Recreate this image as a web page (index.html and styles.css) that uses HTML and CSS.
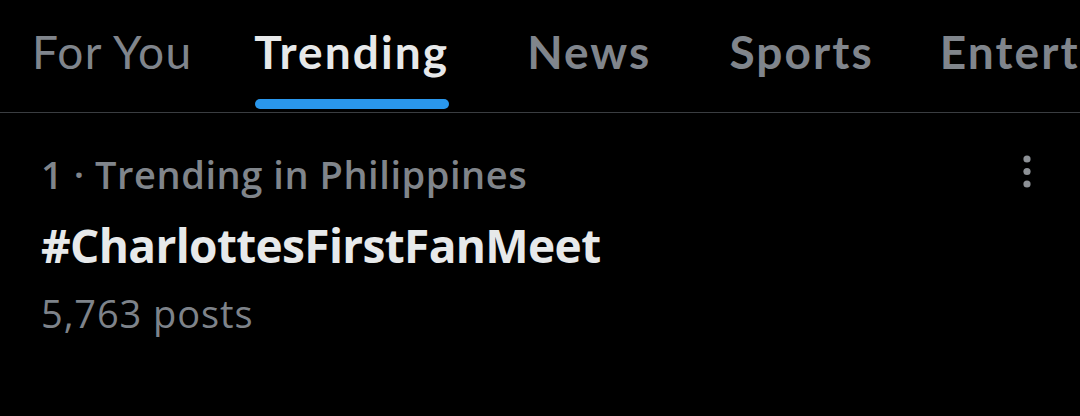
FILE: index.html
```html
<!DOCTYPE html>
<html>
<head>
<meta charset="utf-8">
<link rel="stylesheet" href="styles.css">
</head>
<body>
<nav class="tabs">
  <div class="tab regular">For You</div>
  <div class="tab active">Trending</div>
  <div class="tab spaced">News</div>
  <div class="tab spaced">Sports</div>
  <div class="tab">Entertainment</div>
</nav>
<section class="trend">
  <div class="trend-text">
    <div class="meta">1 · Trending in Philippines</div>
    <div class="tag">#CharlottesFirstFanMeet</div>
    <div class="count">5,763 posts</div>
  </div>
  <svg class="more" width="10" height="36" viewBox="0 0 10 36">
    <circle cx="5" cy="5" r="3.6" fill="#8d9196"/>
    <circle cx="5" cy="17.5" r="3.6" fill="#8d9196"/>
    <circle cx="5" cy="30" r="3.6" fill="#8d9196"/>
  </svg>
</section>
</body>
</html>
```
FILE: styles.css
```css
html, body {
  margin: 0;
  padding: 0;
  background: #000;
  width: 1080px;
  height: 416px;
  overflow: hidden;
}
.tabs {
  display: flex;
  height: 112px;
  border-bottom: 1px solid #3a3d41;
  padding-left: 32px;
  gap: 66px;
  white-space: nowrap;
  overflow: hidden;
}
.tab {
  position: relative;
  flex: none;
  font-family: Lato, "Noto Sans", sans-serif;
  font-weight: 700;
  font-size: 46px;
  letter-spacing: 2.1px;
  color: #80858c;
  padding-top: 24px;
  line-height: 56px;
}
.tab.regular {
  font-weight: 400;
  letter-spacing: 1.3px;
}
.tab.spaced { margin-left: 12px; }
.tab.active {
  color: #e7e9ea;
  margin-left: -4px;
}
.tab.active::after {
  content: "";
  position: absolute;
  left: 1px;
  right: 0;
  top: 99px;
  height: 10px;
  border-radius: 5px;
  background: #2a97ec;
}
.trend {
  display: flex;
  justify-content: space-between;
  padding: 0 48px 0 41px;
}
.trend-text {
  display: flex;
  flex-direction: column;
}
.meta {
  font-family: "Open Sans", sans-serif;
  font-weight: 600;
  font-size: 38px;
  color: #80858b;
  letter-spacing: 0.55px;
  margin-top: 39px;
  line-height: 44px;
}
.tag {
  font-family: "Open Sans", sans-serif;
  font-weight: 700;
  font-size: 46px;
  color: #e7e9ea;
  letter-spacing: -0.65px;
  line-height: 52px;
  margin-top: 23px;
}
.count {
  font-family: "Open Sans", sans-serif;
  font-weight: 400;
  font-size: 38px;
  color: #7e838a;
  letter-spacing: 0.9px;
  line-height: 44px;
  margin-top: 20px;
}
.more {
  margin-top: 41px;
}
```
